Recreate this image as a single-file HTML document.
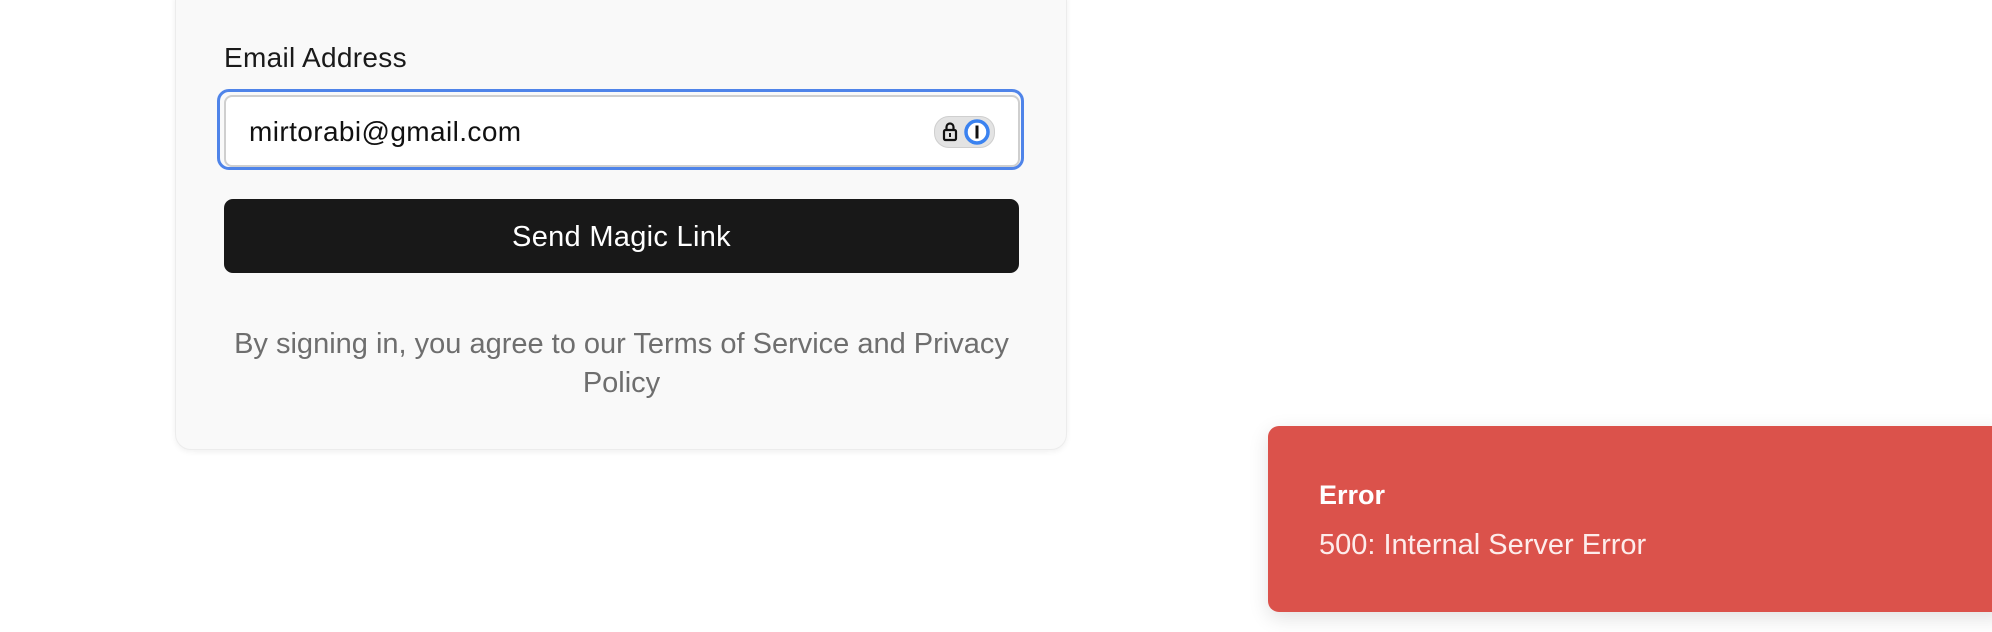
<!DOCTYPE html>
<html><head><meta charset="utf-8"><style>
html,body{margin:0;padding:0;width:1992px;height:632px;overflow:hidden;background:#fff;font-family:"Liberation Sans",sans-serif;}
.card{position:absolute;left:175px;top:-20px;width:890px;height:468px;background:#f9f9f9;border:1px solid #ececec;border-radius:16px;box-shadow:0 2px 6px rgba(0,0,0,.06);}
.label{position:absolute;left:224px;top:42px;font-size:28px;color:#1a1a1a;letter-spacing:0.3px;}
.ring{position:absolute;left:217px;top:89px;width:801px;height:75px;border:3px solid #4f84e9;border-radius:12px;}
.input{position:absolute;left:224px;top:95px;width:792px;height:68px;border:2px solid #cfcfcf;border-radius:8px;background:#fff;}
.itext{position:absolute;left:249px;top:116px;font-size:28px;color:#111;letter-spacing:0.4px;}
.pill{position:absolute;left:934px;top:116px;width:59px;height:30px;border-radius:15px;background:#e3e3e3;border:1px solid #cfcfcf;}
.btn{position:absolute;left:224px;top:199px;width:795px;height:74px;background:#181818;border-radius:9px;color:#fff;font-size:29px;text-align:center;line-height:77px;letter-spacing:0.3px;}
.foot{position:absolute;left:200px;width:843px;top:325px;text-align:center;font-size:29px;line-height:39px;color:#6e6e6e;}
.toast{position:absolute;left:1268px;top:426px;width:740px;height:186px;background:#db524b;border-radius:11px;box-shadow:0 6px 20px rgba(0,0,0,.12);color:#fff;}
.t1{position:absolute;left:51px;top:54px;font-size:27px;font-weight:bold;}
.t2{position:absolute;left:51px;top:103px;font-size:29px;color:#fdeceb;}
</style></head><body>
<div class="card"></div>
<div class="label">Email Address</div>
<div class="ring"></div>
<div class="input"></div>
<div class="itext">mirtorabi@gmail.com</div>
<div class="pill">
<svg width="59" height="30" viewBox="0 0 59 30" style="position:absolute;left:0;top:0">
<rect x="9" y="13" width="12" height="10" rx="1.5" fill="none" stroke="#111" stroke-width="2.2"/>
<path d="M11.5 13 V10 a3.5 3.5 0 0 1 7 0 V13" fill="none" stroke="#111" stroke-width="2.2"/>
<rect x="14" y="16" width="2" height="4" fill="#111"/>
<circle cx="42" cy="15" r="11" fill="#fff" stroke="#3a82f0" stroke-width="3.5"/>
<rect x="40.5" y="8.5" width="3" height="13" fill="#111"/>
</svg>
</div>
<div class="btn">Send Magic Link</div>
<div class="foot">By signing in, you agree to our Terms of Service and Privacy<br>Policy</div>
<div class="toast"><div class="t1">Error</div><div class="t2">500: Internal Server Error</div></div>
</body></html>
